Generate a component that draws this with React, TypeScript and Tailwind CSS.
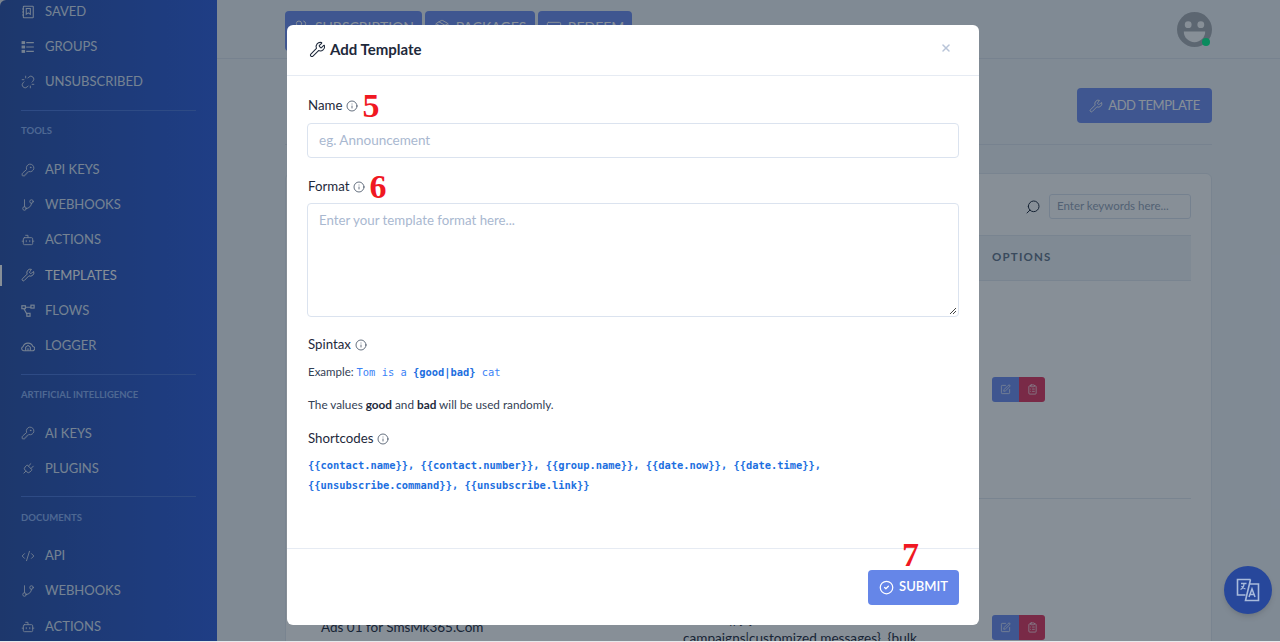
import { Unlink, KeyRound, GitBranch, Bot, Wrench, Plug, CodeXml, Info, Search, CircleCheck, SquarePen, ClipboardList, Users, Package, CreditCard, X } from "lucide-react";
import type { ComponentType, ReactNode } from "react";

type NavIcon = ComponentType<{ className?: string; strokeWidth?: number }>;

function SavedIcon({ className }: { className?: string }) {
  return (
    <svg className={className} viewBox="0 0 24 24" fill="none" stroke="currentColor" strokeWidth="1.8">
      <rect x="4" y="2" width="17" height="20" rx="1" />
      <path d="M2 7h3M2 12h3M2 17h3" />
      <path d="M9 6h7v10l-3.500-2.500L9 16z" />
    </svg>
  );
}

function GroupsIcon({ className }: { className?: string }) {
  return (
    <svg className={className} viewBox="0 0 24 24" fill="none" stroke="currentColor" strokeWidth="2">
      <rect x="2" y="3" width="4" height="3" fill="currentColor" />
      <rect x="2" y="10.500" width="4" height="3" fill="currentColor" />
      <rect x="2" y="18" width="4" height="3" fill="currentColor" />
      <path d="M9 4.500h13M9 12h13M9 19.500h13" />
    </svg>
  );
}

function FlowsIcon({ className }: { className?: string }) {
  return (
    <svg className={className} viewBox="0 0 24 24" fill="none" stroke="currentColor" strokeWidth="2">
      <rect x="1.500" y="3" width="6" height="5" />
      <rect x="17" y="2" width="5.500" height="5" />
      <rect x="10" y="16" width="5.500" height="5" />
      <path d="M7.500 5.500H17M5 8l5 9" />
    </svg>
  );
}

function LoggerIcon({ className }: { className?: string }) {
  return (
    <svg className={className} viewBox="0 0 24 24" fill="none" stroke="currentColor" strokeWidth="1.800">
      <path d="M6 20H4.500a3.500 3.500 0 0 1-1-6.800A9 9 0 0 1 20.500 13a3.500 3.500 0 0 1-1 7H6z" />
      <path d="M8 20v-6l4-3 4 3v6M12 20v-4" />
    </svg>
  );
}

function PlugIcon({ className, strokeWidth }: { className?: string; strokeWidth?: number }) {
  return <Plug className={`${className} rotate-45`} strokeWidth={strokeWidth} />;
}

function NavItem({ icon: Icon, label, active }: { icon: NavIcon; label: string; active?: boolean }) {
  return (
    <div className={`relative flex h-[35.3px] items-center pl-[21px] text-[13px] ${active ? "text-white" : "text-[#dbe4f5]"}`}>
      {active && <span className="absolute left-0 top-[7px] h-[21px] w-[2px] bg-white" />}
      <Icon className="mr-[10px] h-[14px] w-[14px] shrink-0" strokeWidth={1.5} />
      {label}
    </div>
  );
}

function NavHeading({ children }: { children: ReactNode }) {
  return (
    <>
      <div className="mx-[21px] mt-[10px] border-t border-[#4c76da]" />
      <div className="mx-[21px] flex h-[41px] items-center text-[9.5px] font-bold text-[#8cb0f5]">{children}</div>
    </>
  );
}

function Sidebar() {
  return (
    <aside className="h-full w-[217px] shrink-0 overflow-hidden rounded-tl-[6px] bg-gradient-to-r from-[#2a4fa8] to-[#2e5cdb]">
      <div className="-mt-[6px]">
        <NavItem icon={SavedIcon} label="SAVED" />
        <NavItem icon={GroupsIcon} label="GROUPS" />
        <NavItem icon={Unlink} label="UNSUBSCRIBED" />
        <NavHeading>TOOLS</NavHeading>
        <NavItem icon={KeyRound} label="API KEYS" />
        <NavItem icon={GitBranch} label="WEBHOOKS" />
        <NavItem icon={Bot} label="ACTIONS" />
        <NavItem icon={Wrench} label="TEMPLATES" active />
        <NavItem icon={FlowsIcon} label="FLOWS" />
        <NavItem icon={LoggerIcon} label="LOGGER" />
        <NavHeading>ARTIFICIAL INTELLIGENCE</NavHeading>
        <NavItem icon={KeyRound} label="AI KEYS" />
        <NavItem icon={PlugIcon} label="PLUGINS" />
        <NavHeading>DOCUMENTS</NavHeading>
        <NavItem icon={CodeXml} label="API" />
        <NavItem icon={GitBranch} label="WEBHOOKS" />
        <NavItem icon={Bot} label="ACTIONS" />
      </div>
    </aside>
  );
}

function ActionButtons() {
  return (
    <div className="flex h-[25px] w-[53px] overflow-hidden rounded-[3px] text-white">
      <div className="flex w-[27px] items-center justify-center bg-[#6e8cf0]">
        <SquarePen className="h-[11px] w-[11px]" strokeWidth={1.5} />
      </div>
      <div className="flex w-[26px] items-center justify-center bg-[#e3345f]">
        <ClipboardList className="h-[11px] w-[11px]" strokeWidth={1.5} />
      </div>
    </div>
  );
}

function TopTab({ icon: Icon, label, width }: { icon: NavIcon; label: string; width: string }) {
  return (
    <div className={`flex h-[40px] items-start justify-center gap-[6px] rounded-[4px] bg-[#6e8cf0] pt-[7px] text-[14px] leading-[18px] text-white ${width}`}>
      <Icon className="mt-[1px] h-[16px] w-[16px]" strokeWidth={1.5} />
      {label}
    </div>
  );
}

function Avatar() {
  return (
    <div className="relative mt-[1px] h-[35px] w-[35px]">
      <svg className="h-[35px] w-[35px]" viewBox="0 0 36 36">
        <circle cx="18" cy="18" r="18" fill="#a9adb3" />
        <circle cx="11.500" cy="13" r="3.500" fill="#fff" />
        <circle cx="24.500" cy="13" r="3.500" fill="#fff" />
        <path d="M7 20h22a11 11 0 0 1-22 0z" fill="#fff" />
      </svg>
      <span className="absolute bottom-[1px] right-[2px] h-[8px] w-[8px] rounded-full bg-[#04f68c]" />
    </div>
  );
}

function Background() {
  return (
    <main className="flex h-full min-w-0 flex-1 flex-col overflow-hidden bg-[#f1f5f9] pl-[68px] pr-[68px]">
      <header className="-mx-[68px] flex h-[59px] shrink-0 justify-between border-b border-[#dfe5ee] pl-[68px] pr-[68px] pt-[11px]">
        <div className="flex gap-[3px]">
          <TopTab icon={Users} label="SUBSCRIPTION" width="w-[137px]" />
          <TopTab icon={Package} label="PACKAGES" width="w-[110px]" />
          <TopTab icon={CreditCard} label="REDEEM" width="w-[94px]" />
        </div>
        <Avatar />
      </header>
      <div className="flex h-[86px] shrink-0 items-start justify-end border-b border-[#dfe5ee] pt-[29px]">
        <div className="flex h-[35px] w-[135px] items-center justify-center gap-[5px] rounded-[4px] bg-[#6e8cf0] text-[13px] tracking-[-0.4px] text-white">
          <Wrench className="h-[14px] w-[14px]" strokeWidth={1.5} />
          ADD TEMPLATE
        </div>
      </div>
      <section className="mt-[28px] flex-1 rounded-t-[6px] border border-[#e2e8f0] bg-white px-[20px] pt-[20px]">
        <div className="flex items-center justify-end gap-[8px]">
          <Search className="h-[16px] w-[16px] -scale-x-100 text-[#1e293b]" strokeWidth={1.5} />
          <div className="flex h-[25px] w-[142px] items-center rounded-[3px] border border-[#dbe3ef] px-[7px] pb-[1px] text-[11.5px] text-[#94a3b8]">Enter keywords here...</div>
        </div>
        <div className="mt-[16px] flex h-[46px] items-center border-y border-[#e2e8f0] bg-[#f1f5f9] pb-[2px] pl-[686px] text-[11.5px] font-bold tracking-[1.2px] text-[#64748b]">OPTIONS</div>
        <div className="flex h-[218px] items-end justify-start border-b border-[#e2e8f0] pb-[96px] pl-[686px]">
          <ActionButtons />
        </div>
        <div className="relative h-[150px]">
          <div className="absolute left-[15px] top-[118px] text-[13.5px] text-[#1e293b]">Ads 01 for SmsMk365.Com</div>
          <div className="absolute left-[423px] top-[109px] text-[14px] text-[#1e293b]">{"|| } {"}</div>
          <div className="absolute left-[377px] top-[129px] whitespace-nowrap text-[13.6px] leading-[20px] text-[#1e293b]">{"campaigns|customized messages}, {bulk"}</div>
          <div className="absolute left-[686px] top-[116px]">
            <ActionButtons />
          </div>
        </div>
      </section>
    </main>
  );
}

function Label({ children, marker }: { children: ReactNode; marker?: string }) {
  return (
    <div className="flex h-[16px] items-center pl-[1px] pt-[2px] text-[13.25px] text-[#1e293b]">
      {children}
      <Info className="ml-[4px] h-[12px] w-[12px] text-[#334155]" strokeWidth={1.5} />
      {marker && <span className="ml-[4px] font-['Liberation_Serif',serif] text-[34px] font-bold leading-[16px] text-[#f01822]">{marker}</span>}
    </div>
  );
}

function TranslateIcon({ className }: { className?: string }) {
  return (
    <svg className={className} viewBox="0 0 24 24" fill="none" stroke="currentColor" strokeWidth="1.600">
      <path d="M9.500 17H1.500V1.500H14.500" />
      <path d="M14.500 1.500L9.500 22.500H22.500V6H13" />
      <path d="M5 5.500h5.500M8 5.500c0 3-1.500 5-3.500 6M5.500 8c1 1.500 2.500 2.500 4 3" strokeWidth="1.300" />
      <path d="M13 19l3-8 3 8M14 16.500h4" strokeWidth="1.500" />
    </svg>
  );
}

function Modal() {
  return (
    <div className="absolute left-[287px] top-[25px] flex h-[600px] w-[692px] flex-col rounded-[6px] bg-white">
      <div className="flex h-[51px] shrink-0 items-center justify-between border-b border-[#e6ebf3] pl-[22px] pr-[27px]">
        <div className="flex items-center gap-[4px] pb-[2px] text-[15px] font-bold text-[#1e293b]">
          <Wrench className="h-[17px] w-[17px]" strokeWidth={1.5} />
          Add Template
        </div>
        <X className="h-[12px] w-[12px] -translate-y-[2px] text-[#b8c4d8]" strokeWidth={3} />
      </div>
      <div className="flex-1 px-[20px] pt-[21px]">
        <Label marker="5">Name</Label>
        <div className="mt-[10px] flex h-[35px] items-center rounded-[4px] border border-[#dbe3ef] px-[11px] pb-[1px] text-[13.5px] text-[#a9b8d0]">eg. Announcement</div>
        <div className="mt-[20px]">
          <Label marker="6">Format</Label>
        </div>
        <div className="relative mt-[9px] h-[114px] rounded-[4px] border border-[#dbe3ef] px-[11px] pt-[7px] text-[13.25px] text-[#a9b8d0]">
          Enter your template format here...
          <svg className="absolute bottom-[1px] right-[1px] h-[8px] w-[8px]" viewBox="0 0 8 8">
            <path d="M1 7L7 1M4 7L7 4" stroke="#444" strokeWidth="1" />
          </svg>
        </div>
        <div className="mt-[19px]">
          <Label>Spintax</Label>
        </div>
        <p className="mt-[13px] h-[14px] pl-[1px] text-[11.5px] leading-[14px] text-[#334155]">
          Example:{" "}
          <span className="font-['DejaVu_Sans_Mono',monospace] text-[10.4px] text-[#3b82f6]">
            Tom is a <b className="text-[#1d6fe0]">{"{good|bad}"}</b> cat
          </span>
        </p>
        <p className="mt-[19px] h-[14px] pl-[1px] text-[11.75px] leading-[14px] text-[#334155]">
          The values <b className="font-bold text-[#1e293b]">good</b> and <b className="font-bold text-[#1e293b]">bad</b> will be used randomly.
        </p>
        <div className="mt-[18px]">
          <Label>Shortcodes</Label>
        </div>
        <p className="mt-[9px] pl-[1px] font-['DejaVu_Sans_Mono',monospace] text-[10.4px] font-bold leading-[20px] text-[#1d6fe0]">
          {"{{contact.name}}, {{contact.number}}, {{group.name}}, {{date.now}}, {{date.time}},"}
          <br />
          {"{{unsubscribe.command}}, {{unsubscribe.link}}"}
        </p>
      </div>
      <div className="relative flex h-[77px] shrink-0 items-center justify-end border-t border-[#e6ebf3] px-[20px]">
        <span className="absolute right-[60px] top-[-12px] font-['Liberation_Serif',serif] text-[34px] font-bold leading-[36px] text-[#f01822]">7</span>
        <div className="flex h-[35px] w-[91px] items-center justify-center gap-[5px] rounded-[4px] bg-[#6586e8] text-[13px] font-semibold text-white">
          <CircleCheck className="h-[15px] w-[15px]" strokeWidth={2} />
          SUBMIT
        </div>
      </div>
    </div>
  );
}

export default function App() {
  return (
    <div className="h-[642px] w-[1280px] overflow-hidden bg-[#e6e9ec] font-['Lato',sans-serif]">
      <div className="relative flex h-[641px] w-full overflow-hidden">
        <Sidebar />
        <Background />
        <div className="absolute inset-0 bg-[#0f1f30]/50" />
        <Modal />
        <div className="absolute left-[1224px] top-[566px] flex h-[48px] w-[48px] items-center justify-center rounded-full bg-[#27479b] shadow-md">
          <TranslateIcon className="h-[24px] w-[24px] text-[#a9bbdc]" />
        </div>
      </div>
    </div>
  );
}
